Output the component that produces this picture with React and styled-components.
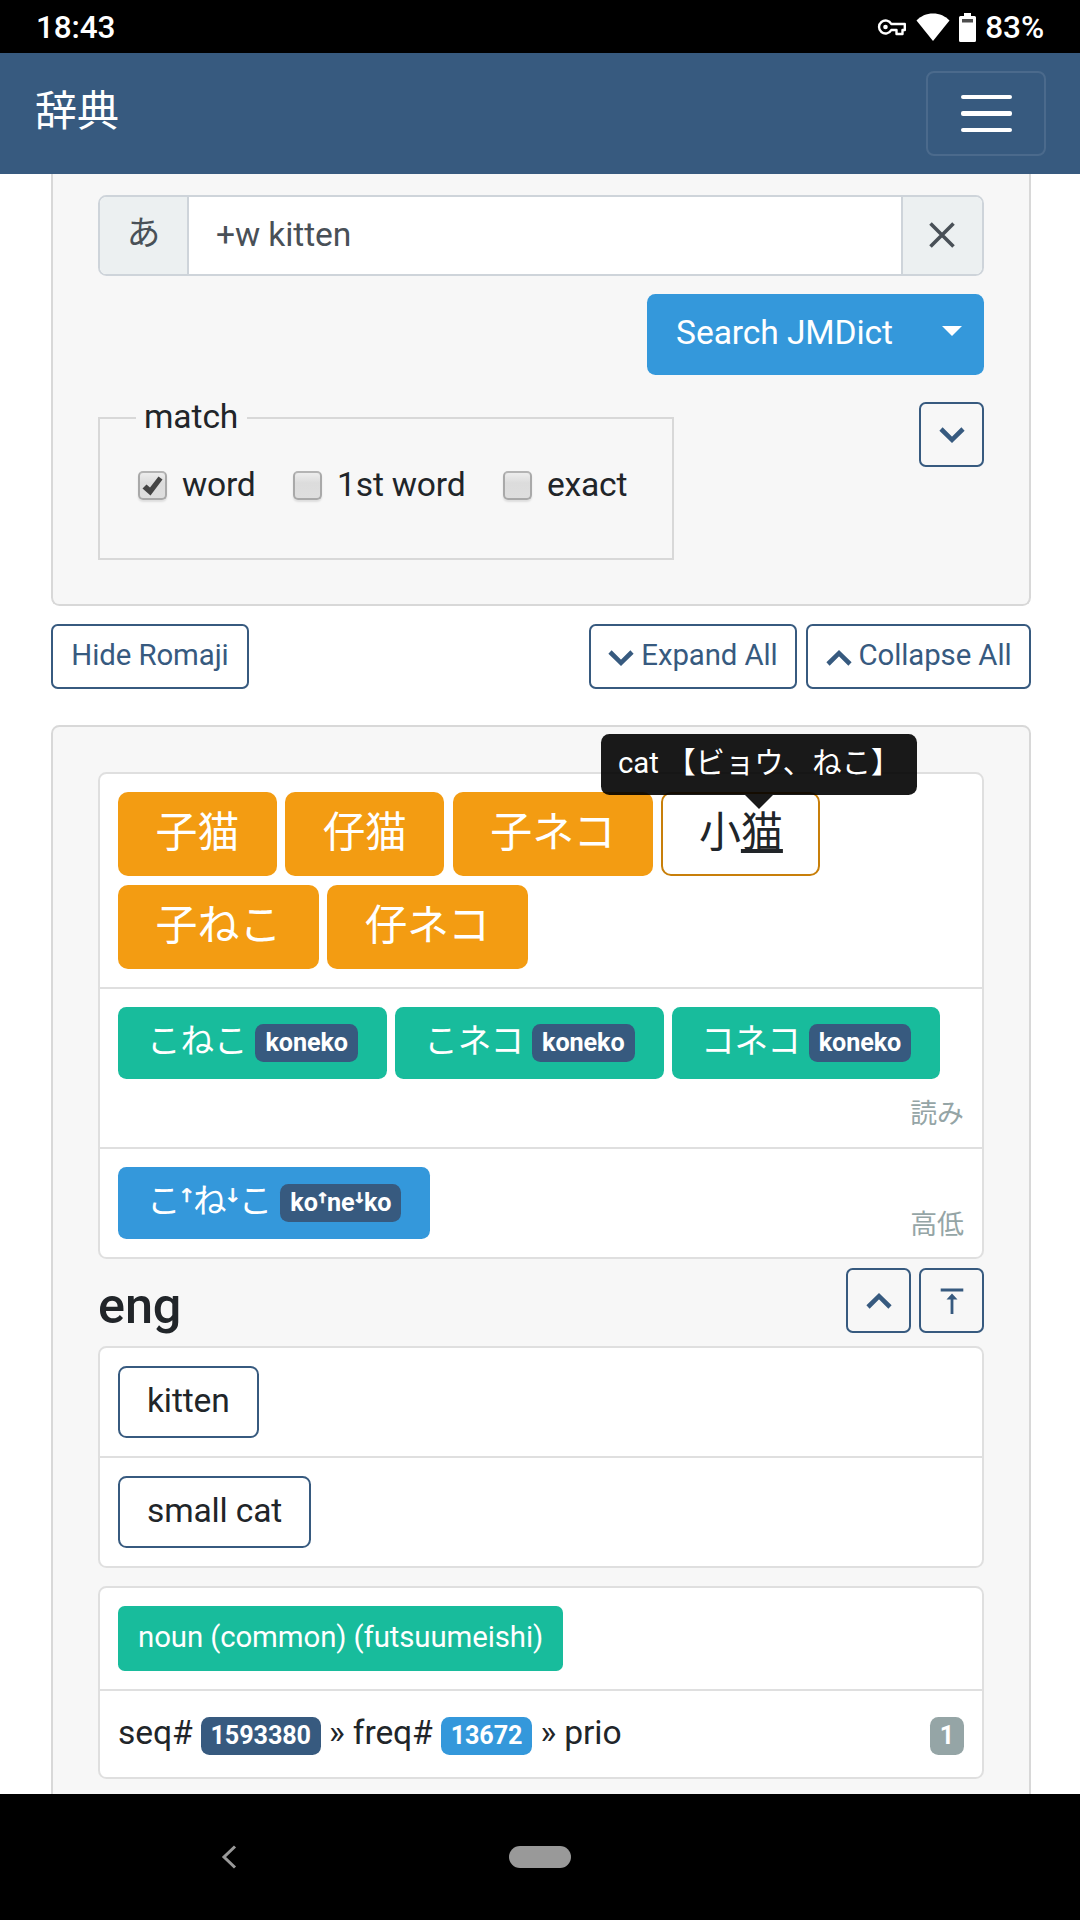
import React from "react";
import styled, { createGlobalStyle } from "styled-components";

const GlobalStyle = createGlobalStyle`
  * { box-sizing: border-box; }
  html { font-size: 33.6px; }
  body {
    margin: 0;
    background: #fff;
    color: #212529;
    font-family: Roboto, "Noto Sans CJK JP", "Noto Sans", "DejaVu Sans", sans-serif;
    line-height: 1.5;
  }
  button, input { font: inherit; color: inherit; margin: 0; letter-spacing: inherit; }
`;

const blue = "#375a7f";

const Screen = styled.div`
  display: flex;
  flex-direction: column;
  width: 1080px;
  height: 1920px;
  overflow: hidden;
  letter-spacing: -0.1px;
`;

const StatusBar = styled.div`
  display: flex;
  align-items: center;
  justify-content: space-between;
  flex: none;
  height: 53px;
  padding: 1px 36px 0 36px;
  background: #000;
  color: #fff;
  font-size: 31.5px;
  font-weight: 500;
  line-height: 52px;
`;

const StatusText = styled.span`
  padding-top: 1px;
`;

const StatusIcons = styled.div`
  display: flex;
  align-items: center;
  gap: 9px;
  svg { display: block; }
`;

const NavBar = styled.header`
  display: flex;
  align-items: center;
  justify-content: space-between;
  flex: none;
  height: 121px;
  padding: 0 34px 0 35px;
  background: ${blue};
`;

const Brand = styled.span`
  color: #fff;
  font-size: 42px;
  letter-spacing: 0;
  line-height: 60px;
  padding-bottom: 3px;
`;

const Toggler = styled.button`
  display: flex;
  flex-direction: column;
  align-items: center;
  justify-content: center;
  gap: 12.6px;
  width: 120px;
  height: 85px;
  background: transparent;
  border: 2px solid rgba(255, 255, 255, 0.1);
  border-radius: 8px;
`;

const Bar = styled.span`
  width: 51px;
  height: 4.2px;
  border-radius: 2px;
  background: #fff;
`;

const Content = styled.main`
  flex: 1;
  min-height: 0;
  overflow: hidden;
  padding: 0 49px 0 51px;
`;

const Card = styled.section`
  background: #f7f7f7;
  border: 2px solid #d8d8d8;
  border-radius: 8.4px;
  padding: 0 45px;
`;

const SearchCard = styled(Card)`
  height: 432px;
  border-top: 0;
  border-radius: 0 0 8.4px 8.4px;
  padding-top: 21px;
`;

const ResultCard = styled(Card)`
  margin-top: 36px;
  padding-top: 45px;
  height: 1300px;
`;

const InputGroup = styled.div`
  display: flex;
  height: 81px;
  border: 2px solid #ced4da;
  border-radius: 8.4px;
  background: #fff;
  overflow: hidden;
  color: #495057;
`;

const AddOn = styled.span`
  display: flex;
  align-items: center;
  justify-content: center;
  flex: none;
  width: ${(p) => p.$width}px;
  padding-bottom: ${(p) => (p.$end ? 1 : 2)}px;
  padding-right: ${(p) => (p.$end ? 1 : 0)}px;
  background: #ecf0f1;
  border: 0 solid #ced4da;
  border-width: ${(p) => (p.$end ? "0 0 0 2px" : "0 2px 0 0")};
`;

const Query = styled.input`
  flex: 1;
  min-width: 0;
  border: 0;
  outline: 0;
  background: #fff;
  padding: 0 26px 1px 27px;
`;

const SubmitRow = styled.div`
  display: flex;
  justify-content: flex-end;
  margin-top: 18px;
`;

const SubmitGroup = styled.div`
  display: flex;
  height: 81px;
  color: #fff;
  background: #3498db;
  border-radius: 8.4px;
`;

const Submit = styled.button`
  width: 275px;
  border: 0;
  background: transparent;
  padding: 0 0 3px;
`;

const CaretButton = styled.button`
  display: flex;
  width: 62px;
  border: 0;
  background: transparent;
  padding: 32px 0 0 20px;
`;

const Caret = styled.span`
  border: 10px solid transparent;
  border-top-color: #fff;
  border-bottom: 0;
  height: 0;
`;

const OptionsRow = styled.div`
  display: flex;
  align-items: flex-start;
  justify-content: space-between;
  margin-top: 27px;
`;

const Match = styled.fieldset`
  width: 576px;
  height: 168px;
  margin: -10px 0 0;
  padding: 17px 36px 0 38px;
  border: 2px solid #d8d8d8;
`;

const Legend = styled.legend`
  margin-left: -2px;
  padding: 0 9px 1px 8px;
  line-height: 50px;
`;

const Checks = styled.div`
  display: flex;
  gap: 37.5px;
`;

const CheckLabel = styled.label`
  display: flex;
  align-items: center;
  gap: 15px;
  line-height: 50px;
  letter-spacing: -0.2px;
  white-space: nowrap;
`;

const Box = styled.span`
  display: flex;
  align-items: center;
  justify-content: center;
  flex: none;
  width: 29px;
  height: 29px;
  margin-top: 1px;
  border: 2px solid #a9a9a9;
  border-top-color: #b4b4b4;
  border-radius: 5px;
  background: linear-gradient(#ededed, #dcdcdc 40%, #dedede);
  box-shadow: 0 2px 2px rgba(0, 0, 0, 0.1);
`;

const SmallButton = styled.button`
  display: flex;
  align-items: center;
  justify-content: center;
  flex: none;
  gap: 7px;
  height: 65px;
  width: ${(p) => p.$width}px;
  padding: 0 0 ${(p) => (p.$icon ? 0 : 3)}px;
  border: 2px solid ${blue};
  border-radius: 6.7px;
  background: transparent;
  color: ${blue};
  font-size: 29.4px;
  line-height: 44px;
  white-space: nowrap;
  svg {
    display: block;
    flex: none;
    margin-top: ${(p) => (p.$icon ? 0 : 5)}px;
  }
`;

const Toolbar = styled.div`
  display: flex;
  gap: 9px;
  margin-top: 18px;
  > :first-child { margin-right: auto; }
`;

const List = styled.div`
  background: #fff;
  border: 2px solid #dfdfdf;
  border-radius: 8.4px;
  margin-top: ${(p) => p.$gap || 0}px;
`;

const Row = styled.div`
  display: flex;
  flex-wrap: wrap;
  align-content: flex-start;
  gap: 9px 8.4px;
  padding: 18px;
  height: ${(p) => p.$height}px;
  & + & { border-top: 2px solid #dfdfdf; }
`;

const Note = styled.small`
  align-self: flex-end;
  margin: 0 0 -6px auto;
  font-size: 26.9px;
  letter-spacing: 0;
  line-height: 40px;
  color: #95a5a6;
`;

const WrappedNote = styled(Note)`
  margin-top: 6px;
`;

const fills = { orange: "#f39c12", green: "#18bc9c", sky: "#3498db" };

const Term = styled.button`
  display: flex;
  align-items: center;
  height: 84px;
  padding: 0 37.5px 3px;
  border: 0;
  border-radius: 10px;
  background: ${fills.orange};
  color: #fff;
  font-size: 42px;
  letter-spacing: 0;
  line-height: 60px;
  white-space: nowrap;
`;

const OutlineTerm = styled(Term)`
  padding: 0 35.5px 3px;
  border: 2px solid #c87f0a;
  background: #fff;
  color: #212529;
`;

const Kanji = styled.span`
  position: relative;
  text-decoration: underline;
  text-decoration-thickness: 4px;
  text-underline-offset: 1.5px;
  text-decoration-skip-ink: none;
`;

const Tooltip = styled.span`
  position: absolute;
  bottom: 68px;
  left: calc(50% - 3px);
  transform: translateX(-50%);
  z-index: 2;
  width: 316px;
  height: 61px;
  padding: 7px 0 0 17px;
  border-radius: 8.4px;
  background: rgba(0, 0, 0, 0.9);
  color: #fff;
  font-size: 29.4px;
  line-height: 44px;
  text-align: left;
  &::after {
    content: "";
    position: absolute;
    top: 100%;
    left: 50%;
    margin-left: -14px;
    border: 14px solid transparent;
    border-top-color: rgba(0, 0, 0, 0.9);
    border-bottom: 0;
  }
`;

const Reading = styled.button`
  display: flex;
  align-items: center;
  gap: 8px;
  height: 72px;
  padding: 0 29px 0 29px;
  border: 0;
  border-radius: 8.4px;
  background: ${(p) => fills[p.$fill]};
  color: #fff;
  line-height: 50px;
  white-space: nowrap;
`;

const Kana = styled.span`
  padding-bottom: 3px;
`;

const Pitch = styled.span`
  display: inline-flex;
  justify-content: center;
  width: 0.37em;
  font-family: "DejaVu Sans", sans-serif;
  line-height: 1;
  letter-spacing: 0;
  -webkit-text-stroke: 0.6px currentColor;
`;

const Badge = styled.span`
  display: inline-block;
  flex: none;
  height: 38px;
  padding: 0 10px;
  border-radius: 8.4px;
  background: ${(p) => p.$bg || blue};
  color: #fff;
  font-size: 25.2px;
  font-weight: 700;
  letter-spacing: -0.1px;
  line-height: 37px;
`;

const Heading = styled.div`
  display: flex;
  align-items: center;
  gap: 8px;
  height: 65px;
  margin: 9px 0 13px;
`;

const Lang = styled.h2`
  margin: 0 auto 0 0;
  padding-top: 10px;
  font-size: 50.4px;
  font-weight: 500;
  line-height: 60px;
`;

const Gloss = styled.button`
  height: 72px;
  padding: 0 27px 2px;
  border: 2px solid ${blue};
  border-radius: 8.4px;
  background: #fff;
  letter-spacing: -0.15px;
  white-space: nowrap;
`;

const Pos = styled.button`
  height: 65px;
  padding: 0 20px 2px;
  border: 0;
  border-radius: 6.7px;
  background: ${fills.green};
  color: #fff;
  font-size: 29.4px;
  white-space: nowrap;
`;

const MetaRow = styled(Row)`
  flex-wrap: nowrap;
  align-items: center;
  gap: 8px;
  padding: 4px 18px 0;
`;

const Meta = styled.span`
  padding-bottom: 5px;
`;

const Priority = styled(Badge)`
  margin-left: auto;
`;

const SystemNav = styled.nav`
  display: grid;
  grid-template-columns: 509px 62px 1fr;
  align-items: center;
  flex: none;
  height: 126px;
  background: #000;
  svg { display: block; margin-left: 221px; }
`;

const Home = styled.span`
  height: 22px;
  border-radius: 11px;
  background: #999;
`;

const Chevron = ({ up }) => (
  <svg width="26" height="18" viewBox="0 0 26 18" fill="none" stroke={blue} strokeWidth="4.6">
    <path d={up ? "M2 15 L13 4.2 L24 15" : "M2 3 L13 13.8 L24 3"} />
  </svg>
);

const TopIcon = () => (
  <svg width="24" height="26" viewBox="0 0 24 26" fill={blue}>
    <path d="M.7 0.5h22.6v3H.7zM12 5.5l5.5 6h-4.1V26h-2.8V11.500h-4.100z" />
  </svg>
);

const KeyIcon = () => (
  <svg width="30" height="20" viewBox="0 0 30 20" fill="none" stroke="#fff" strokeWidth="2.4">
    <path
      strokeLinejoin="round"
      d="M14.300 7A6.500 6.500 0 1 0 14.300 13H19.500V17H25.500V13H27.800V7Z"
    />
    <circle cx="8.500" cy="10" r="2.300" fill="#fff" stroke="none" />
  </svg>
);

const WifiIcon = () => (
  <svg width="34" height="28" viewBox="0 0 34 28" fill="#fff">
    <path d="M17 28L.5 7.500C4.500 3 10.500 .4 17 .4S29.500 3 33.500 7.500z" />
  </svg>
);

const BatteryIcon = () => (
  <svg width="17" height="29" viewBox="0 0 17 29">
    <path fill="#fff" d="M5 0h7v3h3.500A1.500 1.500 0 0 1 17 4.500v23a1.500 1.500 0 0 1-1.500 1.500h-14A1.500 1.500 0 0 1 0 27.500v-23A1.500 1.500 0 0 1 1.500 3H5z" />
    <path fill="#4d4d4d" d="M3 6h11v3.500H3z" />
  </svg>
);

const CheckIcon = () => (
  <svg width="21" height="20" viewBox="0 0 21 20" fill="#444">
    <path d="M.5 12.500L4.500 8.500L8 11.500L16.500 .5L20.500 3.500L8.500 19.500z" />
  </svg>
);

const options = [
  { label: "word", checked: true },
  { label: "1st word" },
  { label: "exact" },
];

export default function App() {
  return (
    <Screen>
      <GlobalStyle />
      <StatusBar>
        <StatusText>18:43</StatusText>
        <StatusIcons>
          <KeyIcon />
          <WifiIcon />
          <BatteryIcon />
          <StatusText>83%</StatusText>
        </StatusIcons>
      </StatusBar>
      <NavBar>
        <Brand>辞典</Brand>
        <Toggler aria-label="menu">
          <Bar />
          <Bar />
          <Bar />
        </Toggler>
      </NavBar>
      <Content>
        <SearchCard>
          <InputGroup>
            <AddOn $width={89}>あ</AddOn>
            <Query defaultValue="+w kitten" />
            <AddOn $width={81} $end>
              <svg width="26" height="26" viewBox="0 0 26 26" stroke="#495057" strokeWidth="3.600">
                <path d="M1.500 1.500L24.500 24.500M24.500 1.500L1.500 24.500" />
              </svg>
            </AddOn>
          </InputGroup>
          <SubmitRow>
            <SubmitGroup>
              <Submit>Search JMDict</Submit>
              <CaretButton aria-label="more">
                <Caret />
              </CaretButton>
            </SubmitGroup>
          </SubmitRow>
          <OptionsRow>
            <Match>
              <Legend>match</Legend>
              <Checks>
                {options.map((o) => (
                  <CheckLabel key={o.label}>
                    <Box>{o.checked && <CheckIcon />}</Box>
                    {o.label}
                  </CheckLabel>
                ))}
              </Checks>
            </Match>
            <SmallButton $width={65} $icon>
              <Chevron />
            </SmallButton>
          </OptionsRow>
        </SearchCard>
        <Toolbar>
          <SmallButton $width={198}>Hide Romaji</SmallButton>
          <SmallButton $width={208}>
            <Chevron />
            Expand All
          </SmallButton>
          <SmallButton $width={225}>
            <Chevron up />
            Collapse All
          </SmallButton>
        </Toolbar>
        <ResultCard>
          <List>
            <Row $height={213}>
              <Term>子猫</Term>
              <Term>仔猫</Term>
              <Term>子ネコ</Term>
              <OutlineTerm as="div">
                小
                <Kanji>
                  猫
                  <Tooltip>cat 【ビョウ、ねこ】</Tooltip>
                </Kanji>
              </OutlineTerm>
              <Term>子ねこ</Term>
              <Term>仔ネコ</Term>
            </Row>
            <Row $height={160}>
              {["こねこ", "こネコ", "コネコ"].map((kana) => (
                <Reading key={kana} $fill="green">
                  <Kana>{kana}</Kana>
                  <Badge>koneko</Badge>
                </Reading>
              ))}
              <WrappedNote>読み</WrappedNote>
            </Row>
            <Row $height={110}>
              <Reading $fill="sky">
                <Kana>
                  こ<Pitch>ꜛ</Pitch>ね<Pitch>ꜜ</Pitch>こ
                </Kana>
                <Badge>
                  ko<Pitch>ꜛ</Pitch>ne<Pitch>ꜜ</Pitch>ko
                </Badge>
              </Reading>
              <Note>高低</Note>
            </Row>
          </List>
          <Heading>
            <Lang>eng</Lang>
            <SmallButton $width={65} $icon>
              <Chevron up />
            </SmallButton>
            <SmallButton $width={65} $icon>
              <TopIcon />
            </SmallButton>
          </Heading>
          <List>
            <Row $height={108}>
              <Gloss>kitten</Gloss>
            </Row>
            <Row $height={110}>
              <Gloss>small cat</Gloss>
            </Row>
          </List>
          <List $gap={18}>
            <Row $height={101}>
              <Pos>noun (common) (futsuumeishi)</Pos>
            </Row>
            <MetaRow $height={88}>
              <Meta>seq#</Meta>
              <Badge>1593380</Badge>
              <Meta>» freq#</Meta>
              <Badge $bg="#3498db">13672</Badge>
              <Meta>» prio</Meta>
              <Priority $bg="#95a5a6">1</Priority>
            </MetaRow>
          </List>
        </ResultCard>
      </Content>
      <SystemNav>
        <svg width="16" height="24" viewBox="0 0 16 24" fill="none" stroke="#999" strokeWidth="3">
          <path d="M14 1.500L3 12L14 22.500" />
        </svg>
        <Home />
      </SystemNav>
    </Screen>
  );
}
